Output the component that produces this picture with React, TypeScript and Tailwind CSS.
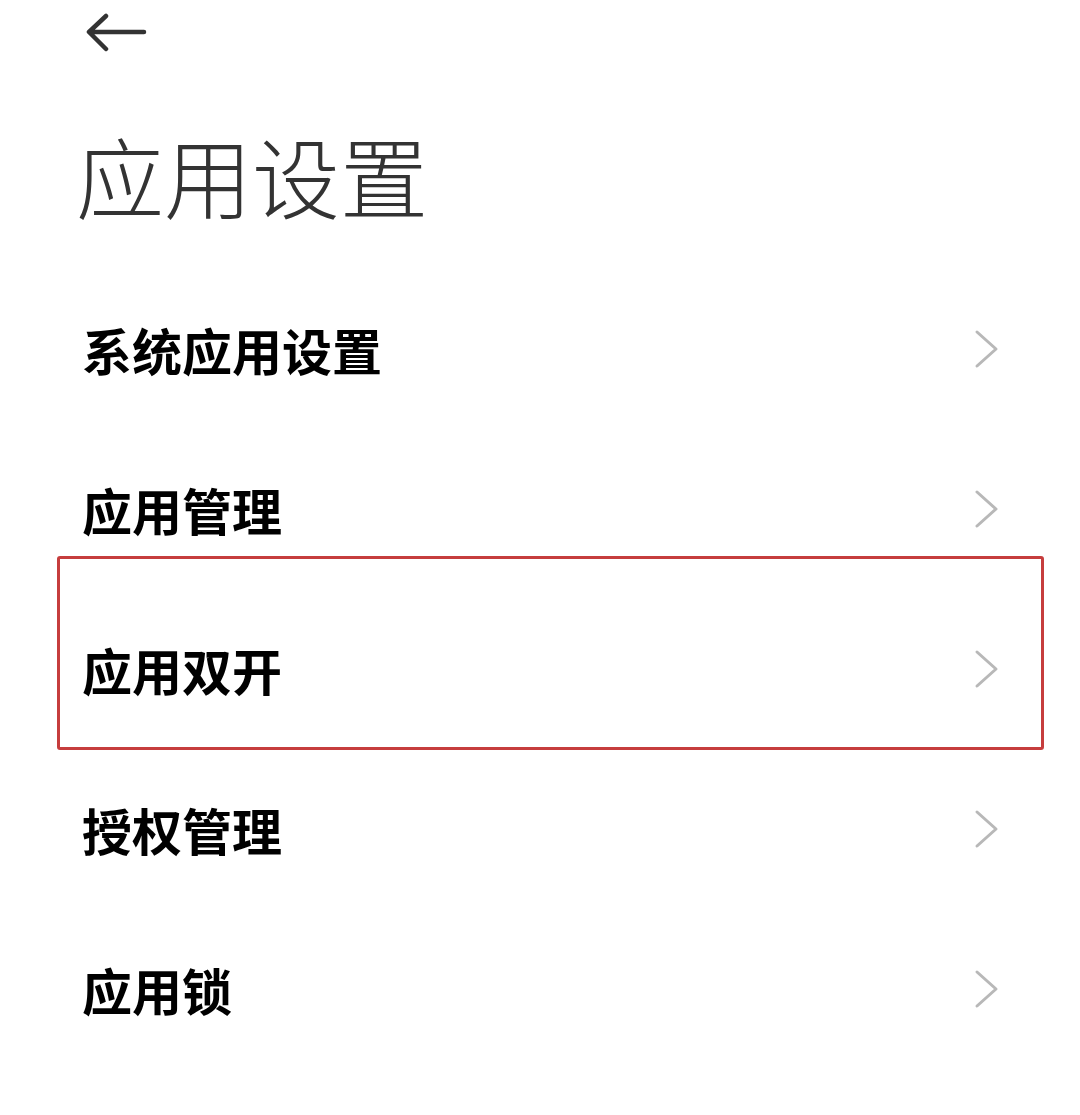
import React from "react";

const items = ["系统应用设置", "应用管理", "应用双开", "授权管理", "应用锁"];

const Chevron = () => (
  <svg width="26" height="40" viewBox="0 0 26 40" fill="none">
    <path
      d="M3 3 L22 20 L3 37"
      stroke="#b8b8b8"
      strokeWidth="3"
      strokeLinecap="round"
      strokeLinejoin="round"
    />
  </svg>
);

export default function App() {
  return (
    <div
      className="w-[1080px] h-[1115px] bg-white overflow-hidden"
      style={{ fontFamily: '"Noto Sans CJK SC", "Noto Sans", sans-serif' }}
    >
      <div className="h-[66px] pl-[86px] pt-[12px]">
        <svg width="62" height="42" viewBox="0 0 62 42" fill="none">
          <path
            d="M58 20 H4 M20 4 L3 20 L20 37"
            stroke="#333333"
            strokeWidth="4.5"
            strokeLinecap="round"
            strokeLinejoin="round"
          />
        </svg>
      </div>
      <h1 className="pl-[76px] mt-[58px] text-[88px] leading-[100px] font-light text-[#333333]">
        应用设置
      </h1>
      <div className="mt-[45px]">
        {items.map((label, i) => (
          <div key={i} className="relative h-[160px] flex items-center justify-between pl-[82px] pr-[80px]">
            {i === 2 && (
              <div className="absolute -top-[33px] -bottom-[1px] left-[57px] right-[36px] border-[3px] border-[#c63d3d] rounded-[3px]" />
            )}
            <span className="text-[50px] font-bold text-black leading-none">{label}</span>
            <Chevron />
          </div>
        ))}
      </div>
    </div>
  );
}
